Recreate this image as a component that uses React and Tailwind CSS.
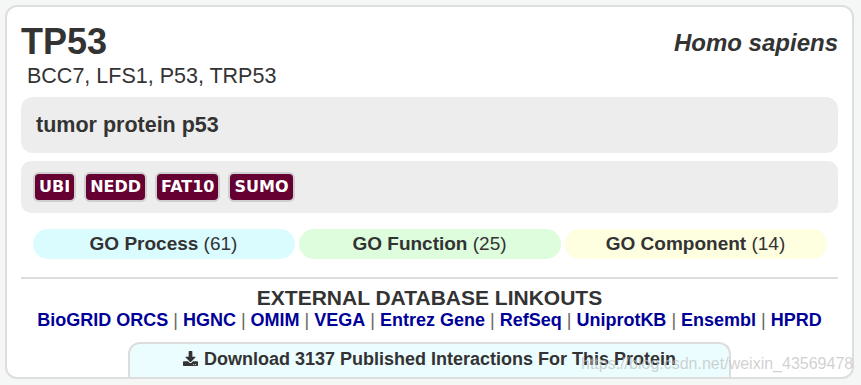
import { FaDownload } from 'react-icons/fa';

const badges = ['UBI', 'NEDD', 'FAT10', 'SUMO'];

const goTerms = [
  { label: 'GO Process', count: 61, color: 'bg-[#dbfcff]' },
  { label: 'GO Function', count: 25, color: 'bg-[#ddfddd]' },
  { label: 'GO Component', count: 14, color: 'bg-[#fefee0]' },
];

const links = ['BioGRID ORCS', 'HGNC', 'OMIM', 'VEGA', 'Entrez Gene', 'RefSeq', 'UniprotKB', 'Ensembl', 'HPRD'];

const App = () => {
  return (
    <div className="relative min-h-screen bg-[#f5f6f6] pt-[5px] pl-[5px] font-['Liberation_Sans',Arial,sans-serif] text-[#333]">
      <div className="w-[849px] h-[374px] border-2 border-[#dedede] rounded-[12px] bg-white flex flex-col overflow-hidden">
        {/* Header */}
        <div className="px-[14px] pt-[15px]">
          <div className="flex justify-between items-start">
            <h1 className="text-[36px] leading-[40px] font-bold">TP53</h1>
            <div className="mt-[7px] text-[24px] leading-[28px] font-bold italic">Homo sapiens</div>
          </div>
          <div className="mt-[2px] ml-[6px] text-[21.5px] leading-[24px]">BCC7, LFS1, P53, TRP53</div>

          <div className="mt-[9px] h-[56px] px-[15px] flex items-center rounded-[12px] bg-[#ededed]">
            <span className="text-[21.5px] leading-[24px] font-bold">tumor protein p53</span>
          </div>

          {/* Badges */}
          <div className="mt-[8px] h-[52px] px-[12px] flex items-center gap-2 rounded-[10px] bg-[#ededed]">
            {badges.map((b) => (
              <span
                key={b}
                className="h-[30px] px-[4px] flex items-center border-2 border-[#cfcfcf] rounded-[6px] bg-[#660033] text-white text-[16px] font-bold font-['DejaVu_Sans',Verdana,sans-serif]"
              >
                {b}
              </span>
            ))}
          </div>

          {/* GO */}
          <div className="mt-[16px] flex justify-center gap-[4px]">
            {goTerms.map((g) => (
              <div key={g.label} className={`w-[262px] h-[30px] rounded-full flex items-center justify-center text-[19px] ${g.color}`}>
                <span className="font-bold">{g.label}</span>
                <span>&nbsp;({g.count})</span>
              </div>
            ))}
          </div>

          <div className="mt-[18px] h-[2px] bg-[#dddddd]" />

          <div className="mt-[8px] text-center text-[21px] leading-[22px] font-bold">EXTERNAL DATABASE LINKOUTS</div>
          <div className="mt-[1px] text-center text-[18px] leading-[20px]">
            {links.map((l, i) => (
              <span key={l}>
                {i > 0 && <span className="text-[#666]"> | </span>}
                <a className="font-bold text-[#000099]">{l}</a>
              </span>
            ))}
          </div>
        </div>

        {/* Download tab */}
        <div className="mt-[12px] mx-auto w-[603px] flex-1 border-2 border-b-0 border-[#dddddd] rounded-t-[12px] bg-[#ebfdff] pt-[5px] text-center text-[18px] leading-[20px] font-bold">
          <FaDownload className="inline-block align-[-1px] mr-[6px]" size={15} />
          Download 3137 Published Interactions For This Protein
        </div>
      </div>

      <div className="absolute left-[581px] top-[354px] text-[16px] leading-[20px] text-[#bdbdbd]/70 pointer-events-none">
        https://blog.csdn.net/weixin_43569478
      </div>
    </div>
  );
};

export default App;
